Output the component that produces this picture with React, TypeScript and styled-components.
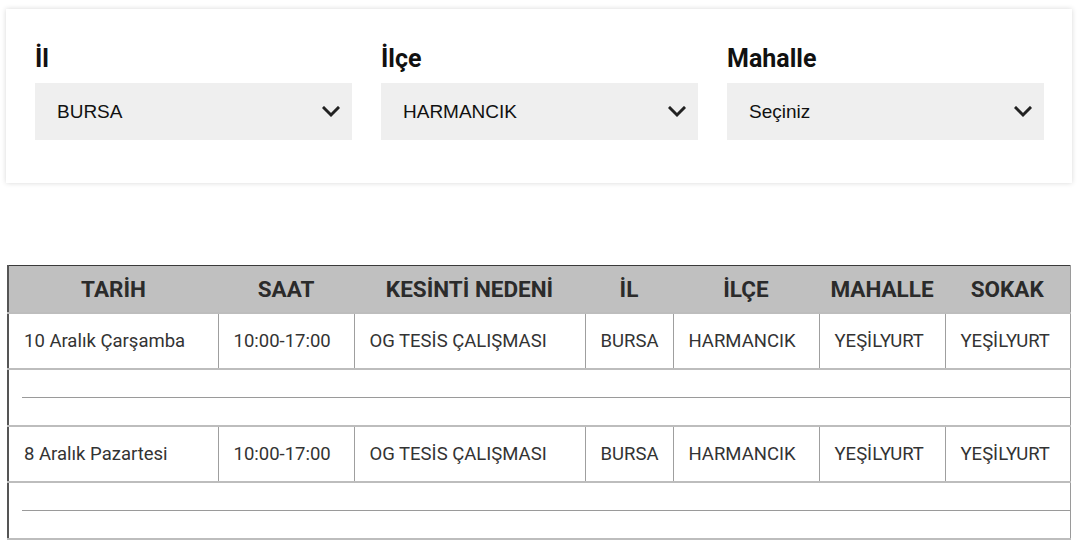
import React from "react";
import styled, { createGlobalStyle } from "styled-components";

const GlobalStyle = createGlobalStyle`
  html, body { margin: 0; padding: 0; background: #ffffff; }
  * { box-sizing: border-box; }
`;

const Page = styled.div`
  padding: 9px 0 16px 6px;
  width: 1086px;
`;

const Card = styled.div`
  width: 1066px;
  background: #fff;
  box-shadow: 0 0 5px rgba(0, 0, 0, 0.16);
  padding: 35px 29px 43px 29px;
  display: grid;
  grid-template-columns: repeat(3, 317px);
  column-gap: 29px;
`;

const Field = styled.div`
  display: flex;
  flex-direction: column;
`;

const Label = styled.div`
  font-family: Roboto, "Noto Sans", sans-serif;
  font-weight: 700;
  font-size: 25px;
  line-height: 30px;
  color: #111;
  margin-bottom: 9px;
`;

const Select = styled.div`
  height: 57px;
  background: #efefef;
  display: flex;
  align-items: center;
  justify-content: space-between;
  padding: 0 12px 0 22px;
  font-family: "Liberation Sans", Arial, sans-serif;
  font-size: 19px;
  color: #111;
`;

const Chevron = () => (
  <svg width="18" height="12" viewBox="0 0 18 12">
    <path d="M2 2 L9 9 L16 2" fill="none" stroke="#222" strokeWidth="3" strokeLinecap="square" />
  </svg>
);

const Table = styled.table`
  margin-top: 82px;
  margin-left: 1px;
  width: 1062px;
  table-layout: fixed;
  border-collapse: collapse;
  border-top: 1px solid #3a3a3a;
  border-left: 2px solid #555;
  border-right: 1px solid #9a9a9a;
  border-bottom: 1px solid #9a9a9a;
  font-family: Roboto, "Noto Sans", sans-serif;
`;

const HeadCell = styled.th`
  background: #c0c0c0;
  height: 47px;
  padding: 0;
  font-weight: 700;
  font-size: 22.5px;
  color: #2b2b2b;
  text-align: center;
  vertical-align: middle;
  white-space: nowrap;
`;

const Row = styled.tr<{ $h: number }>`
  height: ${(p) => p.$h}px;
`;

const Cell = styled.td`
  padding: 0 0 0 15px;
  font-size: 18.5px;
  color: #333;
  text-align: left;
  vertical-align: middle;
  white-space: nowrap;
  border-left: 1px solid #9f9f9f;
  border-right: 1px solid #9f9f9f;
  border-top: 2px solid #bdbdbd;
  border-bottom: 2px solid #bdbdbd;
`;

const SpacerCell = styled.td`
  padding: 0 0 0 13px;
  border-top: 2px solid #bdbdbd;
  border-bottom: 2px solid #bdbdbd;
  vertical-align: middle;
`;

const Rule = styled.div`
  border-top: 1px solid #9a9a9a;
  height: 0;
`;

const cols = [210, 136, 231, 88, 146, 126, 125];
const headers = ["TARİH", "SAAT", "KESİNTİ NEDENİ", "İL", "İLÇE", "MAHALLE", "SOKAK"];
const rows = [
  ["10 Aralık Çarşamba", "10:00-17:00", "OG TESİS ÇALIŞMASI", "BURSA", "HARMANCIK", "YEŞİLYURT", "YEŞİLYURT"],
  ["8 Aralık Pazartesi", "10:00-17:00", "OG TESİS ÇALIŞMASI", "BURSA", "HARMANCIK", "YEŞİLYURT", "YEŞİLYURT"],
];

const fields = [
  { label: "İl", value: "BURSA" },
  { label: "İlçe", value: "HARMANCIK" },
  { label: "Mahalle", value: "Seçiniz" },
];

export default function App() {
  return (
    <>
      <GlobalStyle />
      <Page>
        <Card>
          {fields.map((f) => (
            <Field key={f.label}>
              <Label>{f.label}</Label>
              <Select>
                <span>{f.value}</span>
                <Chevron />
              </Select>
            </Field>
          ))}
        </Card>
        <Table>
          <colgroup>
            {cols.map((w, i) => (
              <col key={i} style={{ width: w }} />
            ))}
          </colgroup>
          <thead>
            <tr>
              {headers.map((h) => (
                <HeadCell key={h}>{h}</HeadCell>
              ))}
            </tr>
          </thead>
          <tbody>
            {rows.map((r, i) => (
              <React.Fragment key={i}>
                <Row $h={56}>
                  {r.map((c, j) => (
                    <Cell key={j}>{c}</Cell>
                  ))}
                </Row>
                <Row $h={57}>
                  <SpacerCell colSpan={7}>
                    <Rule />
                  </SpacerCell>
                </Row>
              </React.Fragment>
            ))}
          </tbody>
        </Table>
      </Page>
    </>
  );
}
